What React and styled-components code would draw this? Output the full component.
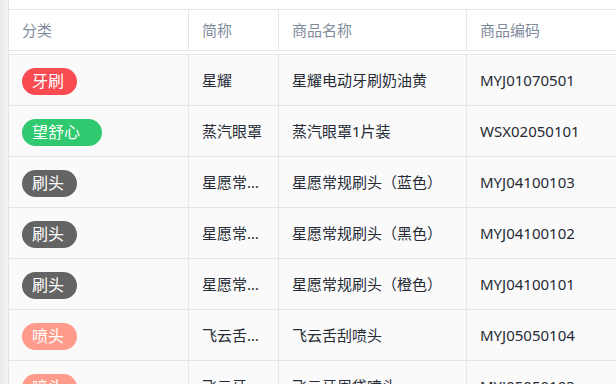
import React from 'react'
import styled, {createGlobalStyle} from 'styled-components'

const rows = [
  {cat: '牙刷', tone: 'red', short: '星耀', name: '星耀电动牙刷奶油黄', code: 'MYJ01070501'},
  {cat: '望舒心', tone: 'green', short: '蒸汽眼罩', name: '蒸汽眼罩1片装', code: 'WSX02050101'},
  {cat: '刷头', tone: 'grey', short: '星愿常规刷头', name: '星愿常规刷头（蓝色）', code: 'MYJ04100103'},
  {cat: '刷头', tone: 'grey', short: '星愿常规刷头', name: '星愿常规刷头（黑色）', code: 'MYJ04100102'},
  {cat: '刷头', tone: 'grey', short: '星愿常规刷头', name: '星愿常规刷头（橙色）', code: 'MYJ04100101'},
  {cat: '喷头', tone: 'salmon', short: '飞云舌刮喷头', name: '飞云舌刮喷头', code: 'MYJ05050104'},
  {cat: '喷头', tone: 'salmon', short: '飞云牙周袋喷头', name: '飞云牙周袋喷头', code: 'MYJ05050103'},
]

const tones = {
  red: '#f94b52',
  green: '#30c96f',
  grey: '#646464',
  salmon: '#fe9b8a',
}

const App = () => (
  <>
    <GlobalStyle />
    <Page>
      <SideStrip />
      <TableWrap>
        <Head>
          <HeadCell>分类</HeadCell>
          <HeadCell>简称</HeadCell>
          <HeadCell>商品名称</HeadCell>
          <HeadCell>商品编码</HeadCell>
        </Head>
        <Body>
          {rows.map((r, index) => (
            <Row key={index}>
              <Cell>
                <Tag $tone={r.tone} $chars={r.cat.length}>{r.cat}</Tag>
              </Cell>
              <Cell>{r.short}</Cell>
              <Cell>{r.name}</Cell>
              <Cell>{r.code}</Cell>
            </Row>
          ))}
        </Body>
      </TableWrap>
    </Page>
  </>
)

export default App

const GlobalStyle = createGlobalStyle`
  html, body {
    margin: 0;
    background: #fff;
    font-family: "Noto Sans", "Noto Sans CJK SC", sans-serif;
  }
`

const Page = styled.div`
  display: flex;
  width: 616px;
  height: 384px;
  overflow: hidden;
`

const SideStrip = styled.div`
  flex: 0 0 8px;
  background: linear-gradient(to right, #eaecec, #f3f4f4);
  border-right: 1px solid #e3e5e5;
`

const TableWrap = styled.div`
  flex: 1;
  padding-top: 9px;
  overflow: hidden;
`

const columns = '180px 90px 188px 220px'

const Head = styled.div`
  display: grid;
  grid-template-columns: ${columns};
  border-top: 1px solid #e6e6e6;
  border-bottom: 1px solid #e6e6e6;
  margin-bottom: 3px;
  background: #fff;
`

const HeadCell = styled.div`
  height: 40px;
  line-height: 40px;
  padding: 0 13px;
  border-right: 1px solid #e6e6e6;
  font-size: 15px;
  color: #7f8b9c;
  white-space: nowrap;
`

const Body = styled.div`
  border-top: 1px solid #e6e6e6;
`

const Row = styled.div`
  display: grid;
  grid-template-columns: ${columns};
  background: #fafafa;
  border-bottom: 1px solid #e6e6e6;
`

const Cell = styled.div`
  min-width: 0;
  height: 50px;
  line-height: 50px;
  padding: 0 13px;
  border-right: 1px solid #e6e6e6;
  font-size: 15px;
  color: #262b36;
  white-space: nowrap;
  overflow: hidden;
  text-overflow: ellipsis;
`

const Tag = styled.span`
  display: inline-block;
  vertical-align: middle;
  box-sizing: border-box;
  width: ${p => p.$chars * 25 + 5}px;
  height: 27px;
  line-height: 27px;
  padding-left: 10px;
  border-radius: 14px;
  background: ${p => tones[p.$tone]};
  color: #fff;
  font-size: 16px;
`
